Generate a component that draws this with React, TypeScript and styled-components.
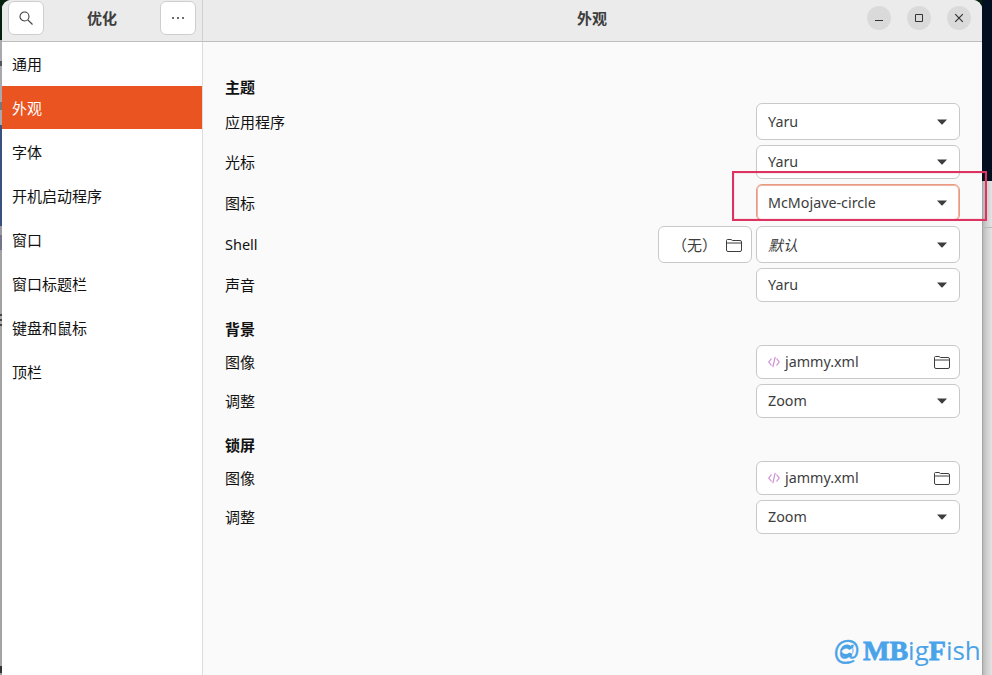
import React from 'react';
import styled, { createGlobalStyle, css } from 'styled-components';

const Global = createGlobalStyle`
  * { box-sizing: border-box; }
  body { margin: 0; overflow: hidden; }
`;

const Desktop = styled.div`
  position: relative;
  display: grid;
  grid-template-columns: 2px 980px 10px;
  width: 992px;
  height: 675px;
  overflow: hidden;
  background: linear-gradient(#06210f 0 40px, #8f8f8f 40px);
  font: 15px/20px 'Noto Sans', 'Noto Sans CJK SC', sans-serif;
  color: #111;
`;

const LeftEdge = styled.div`
  background: linear-gradient(
    #04200f 0 40px, #a9a9ad 40px 61px, #55555c 61px 66px, #a9a9ad 66px 102px,
    #77777c 102px 110px, #a9a9ad 110px 125px, #38537f 125px 226px,
    #99999f 226px 235px, #74748a 235px 250px, #a2a2a2 250px 314px,
    #444 314px 316px, #aaa 316px 319px, #444 319px 321px, #aaa 321px 324px,
    #444 324px 326px, #a4a4a4 326px 666px, #333 666px 673px, #999 673px
  );
`;

const RightEdge = styled.div`
  background:
    linear-gradient(#020f20 0 181px, transparent 181px),
    linear-gradient(transparent 0 227px, #b9b9b9 227px 228px, transparent 228px),
    linear-gradient(90deg, #8f8f8f 0, #b9b9b9 1px, #cccccc 4px, #e4e4e4 10px);
`;

const Win = styled.div`
  display: grid;
  grid-template: 42px 1fr / 200px 1fr;
  border-radius: 9px 9px 0 0;
  overflow: hidden;
  background: #fafafa;
`;

const bar = css`
  background: #ebebeb;
  border-bottom: 1px solid #bdbdbd;
  font-weight: 700;
  color: #3d3d3d;
`;

const SideHeader = styled.header`
  ${bar}
  display: flex;
  align-items: flex-start;
  justify-content: space-between;
  padding: 1px 6px 0;
`;

const MainHeader = styled.header`
  ${bar}
  display: grid;
  grid-template-columns: 1fr auto;
  border-left: 1px solid #cfcfcf;
  padding: 6px 11px 0 0;
`;

const SideTitle = styled.div`
  padding-top: 7px;
`;

const MainTitle = styled.div`
  padding: 2px 0 0 374px;
`;

const HeaderButton = styled.button`
  display: grid;
  place-items: center;
  width: 36px;
  height: 34px;
  padding: 0;
  border: 1px solid #cecece;
  border-radius: 6px;
  background: #fff;
`;

const WindowButtons = styled.div`
  display: flex;
  gap: 16px;
`;

const Round = styled.button`
  display: grid;
  place-items: center;
  width: 24px;
  height: 24px;
  padding: 0;
  border: 0;
  border-radius: 50%;
  background: #dadada;
`;

const Sidebar = styled.nav`
  display: flex;
  flex-direction: column;
  gap: 1px;
  background: #fff;
`;

const NavItem = styled.a<{ $active?: boolean }>`
  height: 43px;
  padding: 12px 10px 0;
  background: ${(p) => (p.$active ? '#e95420' : 'transparent')};
  color: ${(p) => (p.$active ? '#fff' : '#111')};
`;

const Content = styled.main`
  display: flex;
  flex-direction: column;
  gap: 5px;
  padding: 35px 22px 0;
  border-left: 1px solid #dcdcdc;
`;

const Heading = styled.h2<{ $first?: boolean }>`
  height: ${(p) => (p.$first ? 21 : 33)}px;
  margin: 0;
  padding-top: ${(p) => (p.$first ? 0 : 12)}px;
  font-size: 15px;
  line-height: 20px;
  font-weight: 700;
  color: #111;
`;

const Row = styled.div<{ $tall?: boolean }>`
  display: flex;
  align-items: center;
  gap: 4px;
  height: ${(p) => (p.$tall ? 37 : 34)}px;
`;

const Label = styled.span<{ $latin?: boolean }>`
  flex: 1;
  padding-bottom: ${(p) => (p.$latin ? 2 : 0)}px;
  font-size: ${(p) => (p.$latin ? 14.5 : 15)}px;
`;

const Control = styled.button<{ $focus?: boolean; $small?: boolean }>`
  display: flex;
  align-items: center;
  width: ${(p) => (p.$small ? 94 : 204)}px;
  height: 100%;
  padding: 0 9px 0 ${(p) => (p.$small ? 13 : 11)}px;
  border: 1px solid ${(p) => (p.$focus ? '#e89a82' : '#c9c9c9')};
  border-radius: 6px;
  background: #fff;
  box-shadow: ${(p) => (p.$focus ? 'inset 0 0 0 1px #f0b5a2' : 'none')};
  font: inherit;
  color: #3d3d3d;
`;

const Value = styled.span<{ $cjk?: boolean; $italic?: boolean }>`
  flex: 1;
  text-align: left;
  white-space: nowrap;
  font-size: ${(p) => (p.$cjk ? 15 : 14.3)}px;
  font-style: ${(p) => (p.$italic ? 'italic' : 'normal')};
`;

const IconSlot = styled.span<{ $after?: number }>`
  display: flex;
  margin-right: ${(p) => p.$after ?? 0}px;
`;

const Marker = styled.div`
  position: absolute;
  left: 732px;
  top: 171px;
  width: 255px;
  height: 50px;
  border: 2px solid #dc3360;
  box-shadow: inset 0 0 1px #dc3360;
`;

const Watermark = styled.div`
  position: absolute;
  left: 833px;
  top: 633px;
  display: flex;
  align-items: baseline;
  color: #4ba3e6;
  font: 26px/34px 'Open Sans', sans-serif;
  white-space: nowrap;
`;

const Caps = styled.span`
  font: 700 28px/34px 'Liberation Serif', serif;
  -webkit-text-stroke: 0.8px #46a3f0;
`;

const Light = styled.span`
  font-size: 26px;
`;

const At = styled.span`
  width: 30px;
  font: 27px/34px 'Liberation Sans', sans-serif;
  -webkit-text-stroke: 0.4px #4ba3e6;
`;

const Fish = styled.svg`
  position: absolute;
  left: 7px;
  top: 11px;
`;

const Arrow = () => (
  <IconSlot $after={3}>
    <svg width="10" height="6" viewBox="0 0 10 6"><path d="M0 .5h10L5.6 5.2q-.6.5-1.2 0z" fill="#3d3d3d" /></svg>
  </IconSlot>
);

const Folder = () => (
  <IconSlot>
    <svg width="16" height="14" viewBox="0 0 16 14" fill="none" stroke="#3d3d3d">
      <path d="M.5 12V2.500q0-1 1-1H5l1.500 1h7.500q1.500 0 1.500 1.500v8q0 1.500-1.500 1.500H2Q.5 13.500.5 12zM.5 6q0-1 1-1h13q1 0 1 1" />
    </svg>
  </IconSlot>
);

const Code = () => (
  <IconSlot $after={5}>
    <svg width="12" height="12" viewBox="0 0 12 12" fill="none" stroke="#d08cd6" strokeWidth="1.200">
      <path d="M3.500 2.500.8 6l2.700 3.500M8.500 2.500 11.200 6 8.500 9.500M7.200.8 4.800 11.200" />
    </svg>
  </IconSlot>
);

const Select = ({ value, focus, italic }: { value: string; focus?: boolean; italic?: boolean }) => (
  <Control $focus={focus}>
    <Value $italic={italic} $cjk={italic}>{value}</Value>
    <Arrow />
  </Control>
);

const ImageRows = () => (
  <>
    <Row>
      <Label>图像</Label>
      <Control><Code /><Value>jammy.xml</Value><Folder /></Control>
    </Row>
    <Row><Label>调整</Label><Select value="Zoom" /></Row>
  </>
);

const sections = ['通用', '外观', '字体', '开机启动程序', '窗口', '窗口标题栏', '键盘和鼠标', '顶栏'];

export default function App() {
  return (
    <>
      <Global />
      <Desktop>
        <LeftEdge />
        <Win>
          <SideHeader>
            <HeaderButton aria-label="搜索">
              <svg width="16" height="16" viewBox="0 0 16 16" fill="none" stroke="#3d3d3d" strokeWidth="1.100">
                <circle cx="6.500" cy="6.500" r="4.500" /><path d="m9.800 9.800 4.700 4.700" />
              </svg>
            </HeaderButton>
            <SideTitle>优化</SideTitle>
            <HeaderButton aria-label="菜单">
              <svg width="14" height="4" viewBox="0 0 14 4" fill="#3d3d3d">
                <circle cx="2" cy="2" r="1" /><circle cx="7" cy="2" r="1" /><circle cx="12" cy="2" r="1" />
              </svg>
            </HeaderButton>
          </SideHeader>
          <MainHeader>
            <MainTitle>外观</MainTitle>
            <WindowButtons>
              <Round aria-label="最小化"><svg width="10" height="10"><path d="M1 7.500h8" stroke="#333" /></svg></Round>
              <Round aria-label="最大化"><svg width="10" height="10"><path d="M1.500 1.500h7v7h-7z" fill="none" stroke="#333" /></svg></Round>
              <Round aria-label="关闭"><svg width="10" height="10"><path d="m1.200 1.200 7.600 7.600m0-7.600L1.200 8.800" stroke="#333" strokeWidth="1.200" /></svg></Round>
            </WindowButtons>
          </MainHeader>
          <Sidebar>
            {sections.map((s) => <NavItem key={s} $active={s === '外观'}>{s}</NavItem>)}
          </Sidebar>
          <Content>
            <Heading $first>主题</Heading>
            <Row $tall><Label>应用程序</Label><Select value="Yaru" /></Row>
            <Row><Label>光标</Label><Select value="Yaru" /></Row>
            <Row $tall><Label>图标</Label><Select value="McMojave-circle" focus /></Row>
            <Row $tall>
              <Label $latin>Shell</Label>
              <Control $small><Value $cjk>（无）</Value><Folder /></Control>
              <Select value="默认" italic />
            </Row>
            <Row><Label>声音</Label><Select value="Yaru" /></Row>
            <Heading>背景</Heading>
            <ImageRows />
            <Heading>锁屏</Heading>
            <ImageRows />
          </Content>
        </Win>
        <RightEdge />
        <Marker />
        <Watermark>
          <At>@</At>
          <Caps>MB</Caps><Light>ig</Light><Caps>F</Caps><Light>ish</Light>
          <Fish width="14" height="14" viewBox="0 0 14 14">
            <circle cx="7" cy="7" r="6.500" fill="#4ba3e6" />
            <path d="M1.500 7.500Q5 2.500 9.500 6l3-2v6l-3-1.500Q5 12 1.500 7.500z" fill="#fafafa" />
          </Fish>
        </Watermark>
      </Desktop>
    </>
  );
}
